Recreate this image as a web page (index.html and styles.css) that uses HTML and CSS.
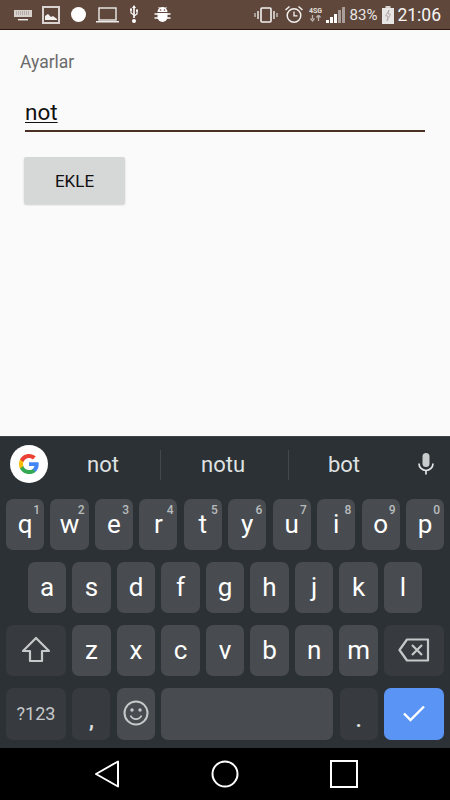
FILE: index.html
```html
<!DOCTYPE html>
<html lang="tr">
<head>
<meta charset="utf-8">
<title>Ayarlar</title>
<link rel="stylesheet" href="styles.css">
</head>
<body>
<div class="screen">
  <header class="status">
    <div class="status-left">
      <svg class="ic" width="18" height="12" viewBox="0 0 18 12"><rect x="0" y="1" width="18" height="7" fill="#d8d2cf"/><path d="M2 3h14M2 5h14" stroke="#7b655d" stroke-width=".7" stroke-dasharray="1 1"/><rect x="4" y="10" width="10" height="1.400" fill="#efeceb"/></svg>
      <svg class="ic" width="18" height="18" viewBox="0 0 18 18"><rect x="1" y="1" width="16" height="16" fill="none" stroke="#d9d4d2" stroke-width="2"/><path d="M3 14V10l3-2 3 3 2-1 4 3v1z" fill="#f3f1f0"/></svg>
      <span class="dot"></span>
      <svg class="ic" width="23" height="16" viewBox="0 0 23 16"><rect x="3" y="1" width="17" height="12" fill="none" stroke="#eeeceb" stroke-width="1.400"/><rect x="0" y="14" width="23" height="1.500" fill="#eeeceb"/></svg>
      <svg class="ic" width="10" height="19" viewBox="0 0 10 19"><path d="M5 0 7 3H5.800v10H4.200V3H3z" fill="#fff"/><path d="M5 10 2 8V5M5 11l3-2V6" fill="none" stroke="#fff" stroke-width="1.200"/><circle cx="5" cy="16" r="2" fill="#fff"/><rect x="1" y="3.500" width="2" height="2" fill="#fff"/><rect x="7" y="4.500" width="2" height="2" fill="#fff"/></svg>
      <svg class="ic bug" width="17" height="17" viewBox="0 0 16 17"><path d="M3 6a5 5 0 0 1 10 0z" fill="#fff"/><path d="M4 1l2 2M12 1l-2 2" stroke="#fff"/><path d="M3 7h10v4a5 5 0 0 1-10 0z" fill="#fff"/><path d="M0 8h16M0 12h16" stroke="#fff" stroke-width="1.300"/><circle cx="6" cy="4" r=".8" fill="#5d4037"/><circle cx="10" cy="4" r=".8" fill="#5d4037"/></svg>
    </div>
    <div class="status-right">
      <svg class="ic" width="24" height="16" viewBox="0 0 24 16"><rect x="7" y="1" width="10" height="14" rx="1" fill="none" stroke="#f3f1f0" stroke-width="1.600"/><path d="M4 4v8M20 4v8" stroke="#e0dbd9" stroke-width="1.600"/><path d="M1 6v4M23 6v4" stroke="#c9c2bf" stroke-width="1.400"/></svg>
      <svg class="ic gap-a" width="20" height="19" viewBox="0 0 19 19"><circle cx="9.500" cy="10.500" r="6.800" fill="none" stroke="#f3f1f0" stroke-width="1.500"/><path d="M9.500 6.500v4.300h3.500" fill="none" stroke="#f3f1f0" stroke-width="1.300"/><path d="M1 5l4-3.500M18 5l-4-3.500" stroke="#f3f1f0" stroke-width="1.500"/></svg>
      <span class="net">
        <span class="net-label">4SG</span>
        <svg width="13" height="7" viewBox="0 0 13 7"><path d="M3.500 0v4M1.500 3.500l2 2.500 2-2.500M9.500 6V2M7.500 2.500l2-2.500 2 2.500" fill="none" stroke="#bdb4b0" stroke-width="1.300"/></svg>
      </span>
      <span class="signal"><i class="s1"></i><i class="s2"></i><i class="s3"></i><i class="s4"></i><i class="s5"></i></span>
      <span class="pct">83%</span>
      <svg class="ic batt" width="12" height="18" viewBox="0 0 12 18"><rect x="3.500" y="0" width="5" height="2" fill="#d8d2cf"/><rect y="2" width="12" height="16" fill="#e8e6e5"/><path d="M7 4 3.500 10H6l-1 5 3.500-7H6z" fill="none" stroke="#a39996" stroke-width=".7"/></svg>
      <span class="time">21:06</span>
    </div>
  </header>

  <main class="content">
    <h1 class="title">Ayarlar</h1>
    <div class="field"><span class="value">not</span></div>
    <button class="add" type="button">EKLE</button>
  </main>

  <section class="keyboard">
    <div class="suggest">
      <span class="g-badge">
        <svg width="22" height="22" viewBox="0 0 48 48"><path fill="#4285F4" d="M45.100 24.500c0-1.600-.1-3.100-.4-4.500H24v8.500h11.800c-.5 2.800-2.100 5.100-4.400 6.700v5.500h7.100c4.200-3.800 6.600-9.500 6.600-16.200z"/><path fill="#34A853" d="M24 46c5.900 0 10.900-2 14.500-5.300l-7.100-5.500c-2 1.300-4.500 2.100-7.400 2.100-5.700 0-10.500-3.800-12.300-9H4.400v5.700C8 41.400 15.400 46 24 46z"/><path fill="#FBBC05" d="M11.700 28.300c-.4-1.300-.7-2.800-.7-4.300s.3-3 .7-4.300V14H4.400C2.900 17 2 20.400 2 24s.9 7 2.400 10z"/><path fill="#EA4335" d="M24 10.700c3.200 0 6.100 1.100 8.400 3.300l6.300-6.300C34.900 4.200 29.900 2 24 2 15.400 2 8 6.600 4.400 14l7.300 5.700c1.800-5.200 6.600-9 12.300-9z"/></svg>
      </span>
      <span class="word w1">not</span><i class="sep s-a"></i>
      <span class="word w2">notu</span><i class="sep s-b"></i>
      <span class="word w3">bot</span>
      <svg class="mic" width="18" height="24" viewBox="0 0 18 24"><rect x="5.500" y="1" width="7" height="14" rx="3.500" fill="#c9cccd"/><path d="M2 11.500a7 7 0 0 0 14 0" fill="none" stroke="#e2e4e5" stroke-width="1.700"/><path d="M9 18.500v4" stroke="#e2e4e5" stroke-width="1.700"/></svg>
    </div>

    <div class="row r10">
      <span class="key">q<sup>1</sup></span><span class="key">w<sup>2</sup></span><span class="key">e<sup>3</sup></span><span class="key">r<sup>4</sup></span><span class="key">t<sup>5</sup></span><span class="key">y<sup>6</sup></span><span class="key">u<sup>7</sup></span><span class="key">i<sup>8</sup></span><span class="key">o<sup>9</sup></span><span class="key">p<sup>0</sup></span>
    </div>
    <div class="row r9">
      <span class="key">a</span><span class="key">s</span><span class="key">d</span><span class="key">f</span><span class="key">g</span><span class="key">h</span><span class="key">j</span><span class="key">k</span><span class="key">l</span>
    </div>
    <div class="row r3">
      <span class="key fn wide"><svg width="30" height="28" viewBox="0 0 30 28"><path d="M15 2 2 15h7v10h12V15h7z" fill="none" stroke="#c6c9ca" stroke-width="2.200" stroke-linejoin="round"/></svg></span>
      <span class="key">z</span><span class="key">x</span><span class="key">c</span><span class="key">v</span><span class="key">b</span><span class="key">n</span><span class="key">m</span>
      <span class="key fn wide"><svg width="32" height="24" viewBox="0 0 32 24"><path d="M9 1.500h21v21H9L1.500 12z" fill="none" stroke="#c6c9ca" stroke-width="2.200" stroke-linejoin="round"/><path d="M14 7l10 10M24 7 14 17" stroke="#c6c9ca" stroke-width="2.200"/></svg></span>
    </div>
    <div class="row r4">
      <span class="key fn wide sym">?123</span>
      <span class="key fn punct">,</span>
      <span class="key"><svg width="26" height="26" viewBox="0 0 26 26"><circle cx="13" cy="13" r="11.500" fill="none" stroke="#c6c9ca" stroke-width="2"/><circle cx="9" cy="10" r="1.700" fill="#c6c9ca"/><circle cx="17" cy="10" r="1.700" fill="#c6c9ca"/><path d="M7.500 15.500a6 6 0 0 0 11 0" fill="none" stroke="#c6c9ca" stroke-width="1.800"/></svg></span>
      <span class="key space"></span>
      <span class="key fn punct">.</span>
      <span class="key wide enter"><svg width="24" height="18" viewBox="0 0 24 18"><path d="M2 9.500l6.500 6.500L22 2.500" fill="none" stroke="#fff" stroke-width="2.400"/></svg></span>
    </div>
  </section>

  <nav class="navbar">
    <svg width="26" height="28" viewBox="0 0 26 28"><path d="M24 1.500v25L2 14z" fill="none" stroke="#fff" stroke-width="2" stroke-linejoin="round"/></svg>
    <svg width="28" height="28" viewBox="0 0 28 28"><circle cx="14" cy="14" r="12.500" fill="none" stroke="#fff" stroke-width="2"/></svg>
    <svg width="28" height="28" viewBox="0 0 28 28"><rect x="1" y="1" width="26" height="26" fill="none" stroke="#fff" stroke-width="2"/></svg>
  </nav>
</div>
</body>
</html>
```
FILE: styles.css
```css
* { box-sizing: border-box; }
html, body { margin: 0; padding: 0; }
body { font-family: Roboto, "Liberation Sans", sans-serif; background: #000; }
.screen { width: 450px; height: 800px; display: flex; flex-direction: column; overflow: hidden; }

.status { height: 30px; flex: none; background: #5f473b; border-bottom: 1px solid #2e1a12; display: flex; justify-content: space-between; align-items: center; padding: 0 9px 0 14px; color: #f3f1f0; }
.status-left, .status-right { display: flex; align-items: center; }
.status-left { gap: 10px; }
.ic { display: block; flex: none; }
.dot { width: 15px; height: 15px; border-radius: 50%; background: #fff; margin-left: 1px; }
.bug { margin-left: 5px; }
.gap-a { margin-left: 6px; }
.net { display: flex; flex-direction: column; align-items: center; margin-left: 5px; width: 14px; }
.net-label { font-size: 7px; font-weight: 700; line-height: 8px; color: #e5e0de; }
.signal { display: flex; align-items: flex-end; gap: 1px; height: 16px; margin-left: 3px; }
.signal i { display: block; width: 3px; background: #a89d98; }
.signal .s1 { height: 3px; background: #fff; }
.signal .s2 { height: 6px; background: #fff; }
.signal .s3 { height: 9px; background: #fff; }
.signal .s4 { height: 13px; }
.signal .s5 { height: 16px; }
.pct { font-size: 15px; margin-left: 5px; color: #e9e6e5; }
.batt { margin-left: 5px; }
.time { font-size: 17.5px; margin-left: 3px; color: #f6f5f4; }

.content { flex: 1; background: #fafafa; padding: 22px 25px 0 20px; }
.title { margin: 0; font-size: 17.5px; line-height: 20px; font-weight: 400; color: #6b6b6b; }
.field { margin: 19px 0 0 5px; height: 41px; border-bottom: 2px solid #4a3023; padding-top: 8px; }
.value { font-size: 22.5px; line-height: 27px; color: #111; text-decoration: underline; text-decoration-thickness: 1px; text-underline-offset: 2px; }
.add { display: block; margin: 25px 0 0 4px; width: 101px; height: 47px; border: 0; border-radius: 2px; background: #d6d7d7; box-shadow: 0 1px 2px rgba(0,0,0,.18); font: 400 17px Roboto, sans-serif; color: #111; padding: 0; }

.keyboard { flex: none; height: 312px; background: #2c3135; border-top: 1px solid #3f4346; position: relative; }
.suggest { height: 62px; color: #dfe2e3; font-size: 22px; position: relative; }
.g-badge { position: absolute; left: 10px; top: 8px; width: 38px; height: 38px; border-radius: 50%; background: #fff; display: flex; align-items: center; justify-content: center; }
.word { position: absolute; top: 14px; line-height: 28px; transform: translateX(-50%); }
.w1 { left: 103px; }
.w2 { left: 223px; }
.w3 { left: 344px; }
.sep { position: absolute; top: 13px; width: 1px; height: 30px; background: #43484b; }
.s-a { left: 160px; }
.s-b { left: 288px; }
.mic { position: absolute; left: 417px; top: 15px; }

.row { display: flex; gap: 6.3px; height: 51px; margin-bottom: 12px; padding: 0 6px; }
.r9 { padding: 0 28px; }
.r4 { height: 52px; margin-bottom: 0; }
.key { flex: 1 1 0; min-width: 0; position: relative; display: flex; align-items: center; justify-content: center; border-radius: 7px; background: #484c50; color: #fff; font-size: 26px; line-height: 1; padding-bottom: 2px; }
.key sup { position: absolute; top: 4px; right: 4px; font-size: 12px; line-height: 14px; color: #b9bcbe; font-weight: 500; }
.key.fn { background: #373b3f; }
.wide { flex: 0 0 60px; }
.space { flex: 0 0 172px; }
.sym { font-size: 18px; color: #c6c9ca; padding: 0; }
.punct { color: #dfe1e2; font-size: 20px; align-items: flex-end; padding-bottom: 10px; font-weight: 700; }
.enter { background: #5a95f5; }

.navbar { flex: none; height: 52px; background: #000; display: flex; align-items: center; gap: 91px; padding-left: 94px; }
```
